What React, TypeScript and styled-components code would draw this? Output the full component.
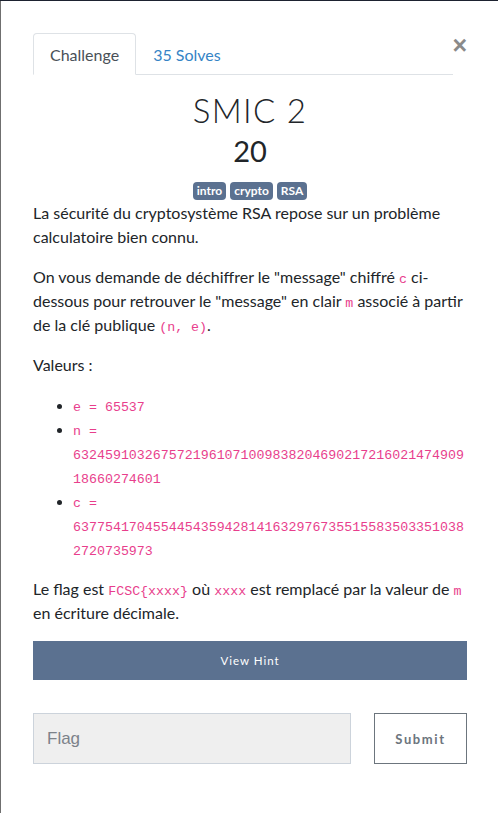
import React from "react";
import styled, { createGlobalStyle } from "styled-components";

const Global = createGlobalStyle`
  html, body { margin: 0; padding: 0; }
  body {
    background: #6f6f6f;
    border-top: 1px solid #1d2230;
    font-family: Lato, "Noto Sans", sans-serif;
    color: #212529;
  }
  * { box-sizing: border-box; }
`;

const Modal = styled.div`
  margin: 0 0 0 1px;
  min-height: calc(100vh - 1px);
  background: #fff;
  padding: 32px 31px 40px 32px;
  position: relative;
`;

const Close = styled.button`
  position: absolute;
  top: 32px;
  right: 31px;
  border: 0;
  background: none;
  padding: 0;
  font-family: "Liberation Sans", Arial, sans-serif;
  font-size: 25px;
  font-weight: 700;
  color: #8a8a8a;
  line-height: 1;
  cursor: pointer;
`;

const Tabs = styled.div`
  display: flex;
  border-bottom: 1px solid #dee2e6;
  margin-right: 14px;
`;

const Tab = styled.div<{ $active?: boolean }>`
  padding: 0 16px;
  height: 42px;
  display: flex;
  align-items: center;
  font-size: 16px;
  margin-bottom: -1px;
  border: 1px solid ${(p) => (p.$active ? "#dee2e6" : "transparent")};
  border-bottom-color: ${(p) => (p.$active ? "#fff" : "transparent")};
  border-radius: 4px 4px 0 0;
  color: ${(p) => (p.$active ? "#495057" : "#3584c6")};
  background: ${(p) => (p.$active ? "#fff" : "transparent")};
`;

const Title = styled.h2`
  margin: 15px 0 0;
  text-align: center;
  font-weight: 300;
  font-size: 33px;
  letter-spacing: 1.3px;
  line-height: 40px;
  color: #212529;
`;

const Value = styled.h4`
  margin: 2px 0 0;
  text-align: center;
  font-weight: 400;
  font-size: 29px;
  line-height: 38px;
`;

const Badges = styled.div`
  display: flex;
  justify-content: center;
  gap: 4px;
  margin-top: 12px;
`;

const Badge = styled.span`
  background: #5b7190;
  color: #fff;
  font-size: 12px;
  font-weight: 700;
  padding: 0 4px;
  height: 18px;
  line-height: 18px;
  border-radius: 4px;
`;

const Body = styled.div`
  font-size: 16px;
  line-height: 24px;
  color: #212529;
  p { margin: 0 0 16px; }
`;

const Desc = styled.div`
  margin-top: 1px;
`;

const Code = styled.code`
  font-family: "Liberation Mono", "DejaVu Sans Mono", monospace;
  font-size: 13.3px;
  line-height: 1;
  color: #e83e8c;
  overflow-wrap: anywhere;
`;

const List = styled.ul`
  margin: 0 0 16px;
  padding-left: 40px;
  li::marker { font-size: 14px; }
`;

const HintButton = styled.button`
  display: block;
  width: 100%;
  height: 39px;
  border: 0;
  background: #5b7190;
  color: #fff;
  font-family: Lato, sans-serif;
  font-size: 11.5px;
  letter-spacing: 1px;
  margin-top: 5px;
`;

const SubmitRow = styled.div`
  display: flex;
  gap: 23px;
  margin-top: 33px;
`;

const FlagInput = styled.input`
  flex: 0 0 318px;
  height: 51px;
  border: 1px solid #ccd3db;
  background: #efefef;
  padding: 0 13px;
  font-family: "Liberation Sans", Arial, sans-serif;
  font-size: 17px;
  color: #495057;
  &::placeholder { color: #7c828a; }
`;

const SubmitButton = styled.button`
  flex: 0 0 93px;
  height: 51px;
  border: 1px solid #6c757d;
  background: #fff;
  color: #6c757d;
  font-family: Lato, sans-serif;
  font-weight: 700;
  font-size: 13px;
  letter-spacing: 1.6px;
`;

export default function App() {
  return (
    <>
      <Global />
      <Modal>
        <Close aria-label="Close">×</Close>
        <Tabs>
          <Tab $active>Challenge</Tab>
          <Tab>35 Solves</Tab>
        </Tabs>
        <Title>SMIC 2</Title>
        <Value>20</Value>
        <Badges>
          <Badge>intro</Badge>
          <Badge>crypto</Badge>
          <Badge>RSA</Badge>
        </Badges>
        <Body>
          <Desc>
            <p>
              La sécurité du cryptosystème RSA repose sur un problème calculatoire bien connu.
            </p>
            <p>
              On vous demande de déchiffrer le "message" chiffré <Code>c</Code> ci-dessous pour
              retrouver le "message" en clair <Code>m</Code> associé à partir de la clé publique{" "}
              <Code>(n, e)</Code>.
            </p>
            <p>Valeurs :</p>
            <List>
              <li>
                <Code>e = 65537</Code>
              </li>
              <li>
                <Code>n = 632459103267572196107100983820469021721602147490918660274601</Code>
              </li>
              <li>
                <Code>c = 63775417045544543594281416329767355155835033510382720735973</Code>
              </li>
            </List>
            <p>
              Le flag est <Code>FCSC{"{xxxx}"}</Code> où <Code>xxxx</Code> est remplacé par la
              valeur de <Code>m</Code> en écriture décimale.
            </p>
          </Desc>
          <HintButton>View Hint</HintButton>
          <SubmitRow>
            <FlagInput placeholder="Flag" />
            <SubmitButton>Submit</SubmitButton>
          </SubmitRow>
        </Body>
      </Modal>
    </>
  );
}
